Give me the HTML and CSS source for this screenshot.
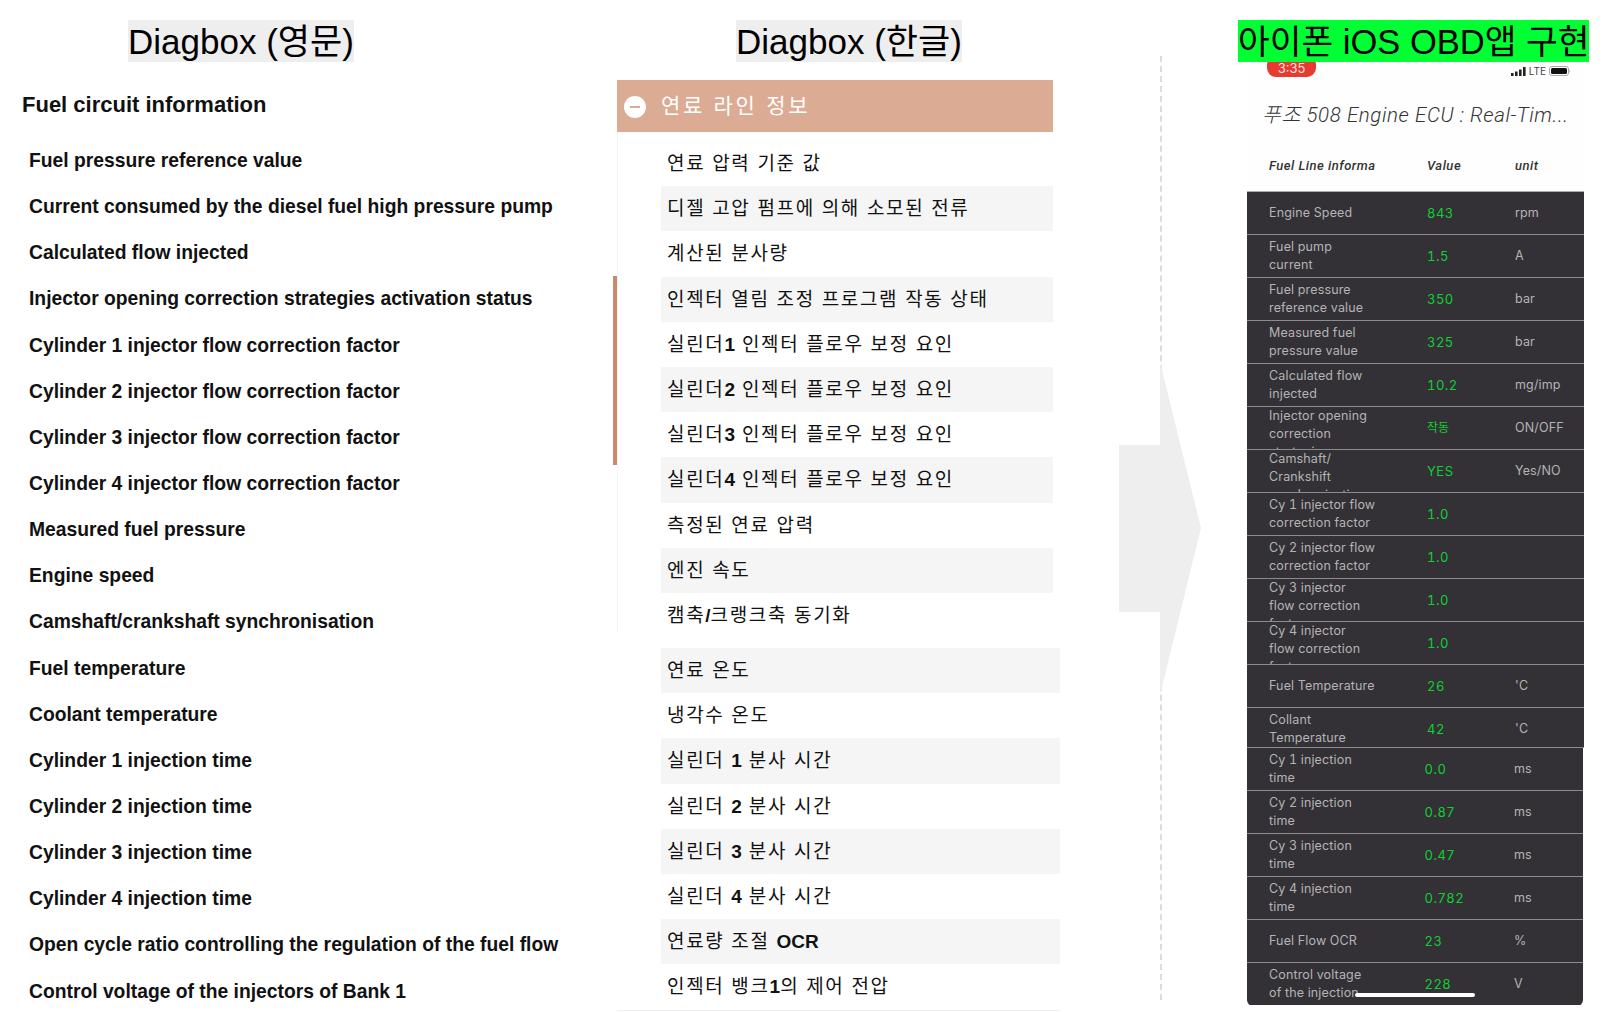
FILE: index.html
```html
<!DOCTYPE html>
<html lang="ko">
<head>
<meta charset="utf-8">
<title>Diagbox</title>
<link rel="stylesheet" href="styles.css">
</head>
<body>
<main class="page">
  <section class="col-en">
    <div class="title-wrap"><h1 class="title">Diagbox (영문)</h1></div>
    <h2 class="en-heading">Fuel circuit information</h2>
    <ul class="en-list">
      <li>Fuel pressure reference value</li>
      <li>Current consumed by the diesel fuel high pressure pump</li>
      <li>Calculated flow injected</li>
      <li>Injector opening correction strategies activation status</li>
      <li>Cylinder 1 injector flow correction factor</li>
      <li>Cylinder 2 injector flow correction factor</li>
      <li>Cylinder 3 injector flow correction factor</li>
      <li>Cylinder 4 injector flow correction factor</li>
      <li>Measured fuel pressure</li>
      <li>Engine speed</li>
      <li>Camshaft/crankshaft synchronisation</li>
      <li>Fuel temperature</li>
      <li>Coolant temperature</li>
      <li>Cylinder 1 injection time</li>
      <li>Cylinder 2 injection time</li>
      <li>Cylinder 3 injection time</li>
      <li>Cylinder 4 injection time</li>
      <li>Open cycle ratio controlling the regulation of the fuel flow</li>
      <li>Control voltage of the injectors of Bank 1</li>
    </ul>
  </section>

  <section class="col-kr">
    <div class="title-wrap-kr"><h1 class="title">Diagbox (한글)</h1></div>
    <h2 class="kr-heading"><span class="minus"></span>연료 라인 정보</h2>
    <span class="scroll-thumb"></span>
    <ul class="kr-list kr-first">
      <li>연료 압력 기준 값</li>
      <li>디젤 고압 펌프에 의해 소모된 전류</li>
      <li>계산된 분사량</li>
      <li>인젝터 열림 조정 프로그램 작동 상태</li>
      <li>실린더<b>1</b> 인젝터 플로우 보정 요인</li>
      <li>실린더<b>2</b> 인젝터 플로우 보정 요인</li>
      <li>실린더<b>3</b> 인젝터 플로우 보정 요인</li>
      <li>실린더<b>4</b> 인젝터 플로우 보정 요인</li>
      <li>측정된 연료 압력</li>
      <li>엔진 속도</li>
      <li>캠축<b>/</b>크랭크축 동기화</li>
    </ul>
    <ul class="kr-list kr-second">
      <li>연료 온도</li>
      <li>냉각수 온도</li>
      <li>실린더 <b>1</b> 분사 시간</li>
      <li>실린더 <b>2</b> 분사 시간</li>
      <li>실린더 <b>3</b> 분사 시간</li>
      <li>실린더 <b>4</b> 분사 시간</li>
      <li>연료량 조절 <b>OCR</b></li>
      <li>인젝터 뱅크<b>1</b>의 제어 전압</li>
    </ul>
  </section>

  <div class="divider">
    <svg class="arrow" width="82" height="333" viewBox="0 0 82 333" aria-hidden="true">
      <path d="M0 83H41V0L82 166L41 333V250H0Z" fill="#eeeeee"/>
    </svg>
  </div>

  <section class="col-phone">
    <h1 class="title title-green">아이폰 iOS OBD앱 구현</h1>
    <div class="phone">
      <div class="status">
        <span class="time">3:35</span>
        <span class="status-right">
          <svg width="15" height="9" viewBox="0 0 15 9" aria-hidden="true"><path d="M0 6h2.600v3H0zM4 4.500h2.600V9H4zM8 2.500h2.600V9H8zM12 0h2.600v9H12z" fill="#222"/></svg>
          <span class="lte">LTE</span>
          <svg width="22" height="10" viewBox="0 0 22 10" aria-hidden="true"><rect x=".5" y=".5" width="19" height="9" rx="2.500" fill="none" stroke="#aaa"/><rect x="2" y="2" width="16" height="6" rx="1.500" fill="#111"/><path d="M20.500 3.500c1 .5 1 2.500 0 3z" fill="#aaa"/></svg>
        </span>
      </div>
      <div class="app-title">푸조 508 Engine ECU : Real-Tim...</div>
      <div class="table-head">
        <span class="head-name">Fuel Line information</span>
        <span>Value</span>
        <span>unit</span>
      </div>
      <div class="table">
        <div class="row"><span class="name">Engine Speed</span><span class="val">843</span><span class="unit">rpm</span></div>
        <div class="row"><span class="name">Fuel pump<br>current</span><span class="val">1.5</span><span class="unit">A</span></div>
        <div class="row"><span class="name">Fuel pressure<br>reference value</span><span class="val">350</span><span class="unit">bar</span></div>
        <div class="row"><span class="name">Measured fuel<br>pressure value</span><span class="val">325</span><span class="unit">bar</span></div>
        <div class="row"><span class="name">Calculated flow<br>injected</span><span class="val">10.2</span><span class="unit">mg/imp</span></div>
        <div class="row"><span class="name clip">Injector opening<br>correction<br>strategies</span><span class="val val-kr">작동</span><span class="unit">ON/OFF</span></div>
        <div class="row"><span class="name clip">Camshaft/<br>Crankshift<br>synchronisation</span><span class="val">YES</span><span class="unit">Yes/NO</span></div>
        <div class="row"><span class="name">Cy 1 injector flow<br>correction factor</span><span class="val">1.0</span><span class="unit"></span></div>
        <div class="row"><span class="name">Cy 2 injector flow<br>correction factor</span><span class="val">1.0</span><span class="unit"></span></div>
        <div class="row"><span class="name clip">Cy 3 injector<br>flow correction<br>factor</span><span class="val">1.0</span><span class="unit"></span></div>
        <div class="row"><span class="name clip">Cy 4 injector<br>flow correction<br>factor</span><span class="val">1.0</span><span class="unit"></span></div>
        <div class="row"><span class="name">Fuel Temperature</span><span class="val">26</span><span class="unit">'C</span></div>
        <div class="row row-short"><span class="name">Collant<br>Temperature</span><span class="val">42</span><span class="unit">'C</span></div>
        <div class="row row-b"><span class="name">Cy 1 injection<br>time</span><span class="val">0.0</span><span class="unit">ms</span></div>
        <div class="row row-b"><span class="name">Cy 2 injection<br>time</span><span class="val">0.87</span><span class="unit">ms</span></div>
        <div class="row row-b"><span class="name">Cy 3 injection<br>time</span><span class="val">0.47</span><span class="unit">ms</span></div>
        <div class="row row-b"><span class="name">Cy 4 injection<br>time</span><span class="val">0.782</span><span class="unit">ms</span></div>
        <div class="row row-b"><span class="name">Fuel Flow OCR</span><span class="val">23</span><span class="unit">%</span></div>
        <div class="row row-b row-last"><span class="name">Control voltage<br>of the injection</span><span class="val">228</span><span class="unit">V</span></div>
      </div>
      <span class="home-bar"></span>
    </div>
  </section>
</main>
</body>
</html>
```

FILE: styles.css
```css
* { box-sizing: border-box; }
html, body { margin: 0; padding: 0; background: #fff; }
body { width: 1604px; height: 1012px; overflow: hidden; font-family: "Liberation Sans", "Noto Sans CJK KR", sans-serif; color: #000; }
ul { list-style: none; margin: 0; padding: 0; }
h1, h2 { margin: 0; font-weight: 400; }

.page { display: flex; height: 1012px; align-items: flex-start; }

.title {
  display: inline-block;
  height: 42px;
  line-height: 44px;
  font-size: 35px;
  background: #eeeeee;
  white-space: nowrap;
}

/* English column */
.col-en { width: 613px; flex: none; padding-top: 20px; }
.title-wrap { padding-left: 128px; height: 42px; }
.en-heading { margin-top: 21px; padding-left: 22px; height: 44px; line-height: 44px; font-size: 22px; font-weight: 700; color: #111; }
.en-list { margin-top: 11px; padding-left: 29px; }
.en-list li { height: 46.150px; line-height: 46px; font-size: 19.300px; font-weight: 700; color: #111; white-space: nowrap; }

/* Korean column */
.col-kr { position: relative; width: 447px; flex: none; margin-left: 4px; padding-top: 20px; }
.title-wrap-kr { padding-left: 119px; height: 42px; }
.kr-heading {
  display: flex;
  align-items: center;
  width: 436px;
  height: 52px;
  margin-top: 18px;
  padding-left: 7px;
  padding-bottom: 4px;
  background: #dbab94;
  color: #fff;
  font-size: 21px;
  letter-spacing: 2.700px;
}
.minus { position: relative; width: 22px; height: 22px; margin-right: 15px; margin-top: 6px; border-radius: 50%; background: #fff; flex: none; }
.minus::after { content: ""; position: absolute; left: 6px; right: 6px; top: 10px; height: 2px; background: #dbab94; }
.scroll-thumb { position: absolute; left: -4px; top: 276px; width: 4px; height: 189px; background: #c98a6e; }
.kr-list { padding-left: 44px; }
.kr-first { width: 436px; padding-top: 9px; height: 501px; border-left: 1px solid #f4f4f4; padding-left: 43px; }
.kr-second { width: 443px; margin-top: 15px; border-bottom: 1px solid #f0f0f0; }
.kr-list li { height: 45.200px; line-height: 46px; padding-left: 6px; font-size: 19px; letter-spacing: 1.650px; color: #111; white-space: nowrap; }
.kr-list li b { letter-spacing: 0; font-weight: 700; }
.kr-first li:nth-child(even), .kr-second li:nth-child(odd) { background: #f5f5f5; }

/* Divider and arrow */
.divider { position: relative; width: 0; height: 944px; margin-top: 56px; margin-left: 96px; flex: none; border-left: 2px dashed #dcdcdc; }
.arrow { position: absolute; left: -43.500px; top: 306px; }

/* Phone column */
.col-phone { width: 351px; flex: none; margin-left: 76px; padding-top: 20px; position: relative; }
.title-green { display: block; width: 351px; background: #00ff33; text-align: center; position: relative; z-index: 1; font-size: 34.500px; }
.phone { position: relative; width: 337px; margin-left: 9px; height: 943px; background: #fefefe; overflow: hidden; font-family: Inter, "Noto Sans CJK KR", sans-serif; }

.status { display: flex; justify-content: space-between; height: 24px; padding: 0 13px 0 20px; }
.time { width: 49px; height: 21px; margin-top: -6px; padding-top: 5px; background: #e63a32; border-radius: 9px; color: #f7e2de; font-size: 13px; line-height: 15px; text-align: center; }
.status-right { display: flex; align-items: center; gap: 3px; margin-top: 2px; height: 14px; }
.lte { font-size: 10px; color: #444; }

.app-title { margin-top: 16px; padding-left: 15px; font-family: Roboto, "Noto Sans CJK KR", sans-serif; font-size: 20.500px; font-weight: 300; letter-spacing: .6px; line-height: 26px; font-style: italic; color: #333; white-space: nowrap; }
.table-head { display: grid; grid-template-columns: 158px 88px 1fr; margin-top: 29px; height: 30px; padding-left: 22px; font-family: Roboto, "Noto Sans CJK KR", sans-serif; font-size: 13px; font-weight: 500; font-style: italic; letter-spacing: .5px; line-height: 18px; color: #333; }
.head-name { width: 107px; overflow: hidden; white-space: nowrap; }

.table { margin-top: 4px; border-top: 1px solid #aaa; }
.row { display: grid; grid-template-columns: 158px 88px 1fr; grid-template-rows: 41.500px; align-items: center; height: 43px; padding-left: 22px; background: #333136; border-bottom: 1.500px solid #8c8c8e; overflow: hidden; font-size: 12.500px; font-variant-numeric: tabular-nums; letter-spacing: .15px; line-height: 18px; color: #b4b4b4; }
.row-short { height: 40px; }
.row-b { grid-template-columns: 155.500px 89.500px 1fr; margin-right: 1px; }
.row-last { height: 43px; border-bottom: 0; border-radius: 0 0 6px 6px; }
.name { display: block; }
.clip { align-self: start; height: 42px; overflow: hidden; }
.val { color: #0fcf33; font-size: 13px; letter-spacing: .5px; }
.val-kr { font-size: 12px; letter-spacing: 0; }
.home-bar { position: absolute; left: 108px; bottom: 8px; width: 120px; height: 4px; border-radius: 2px; background: #fff; }
```
